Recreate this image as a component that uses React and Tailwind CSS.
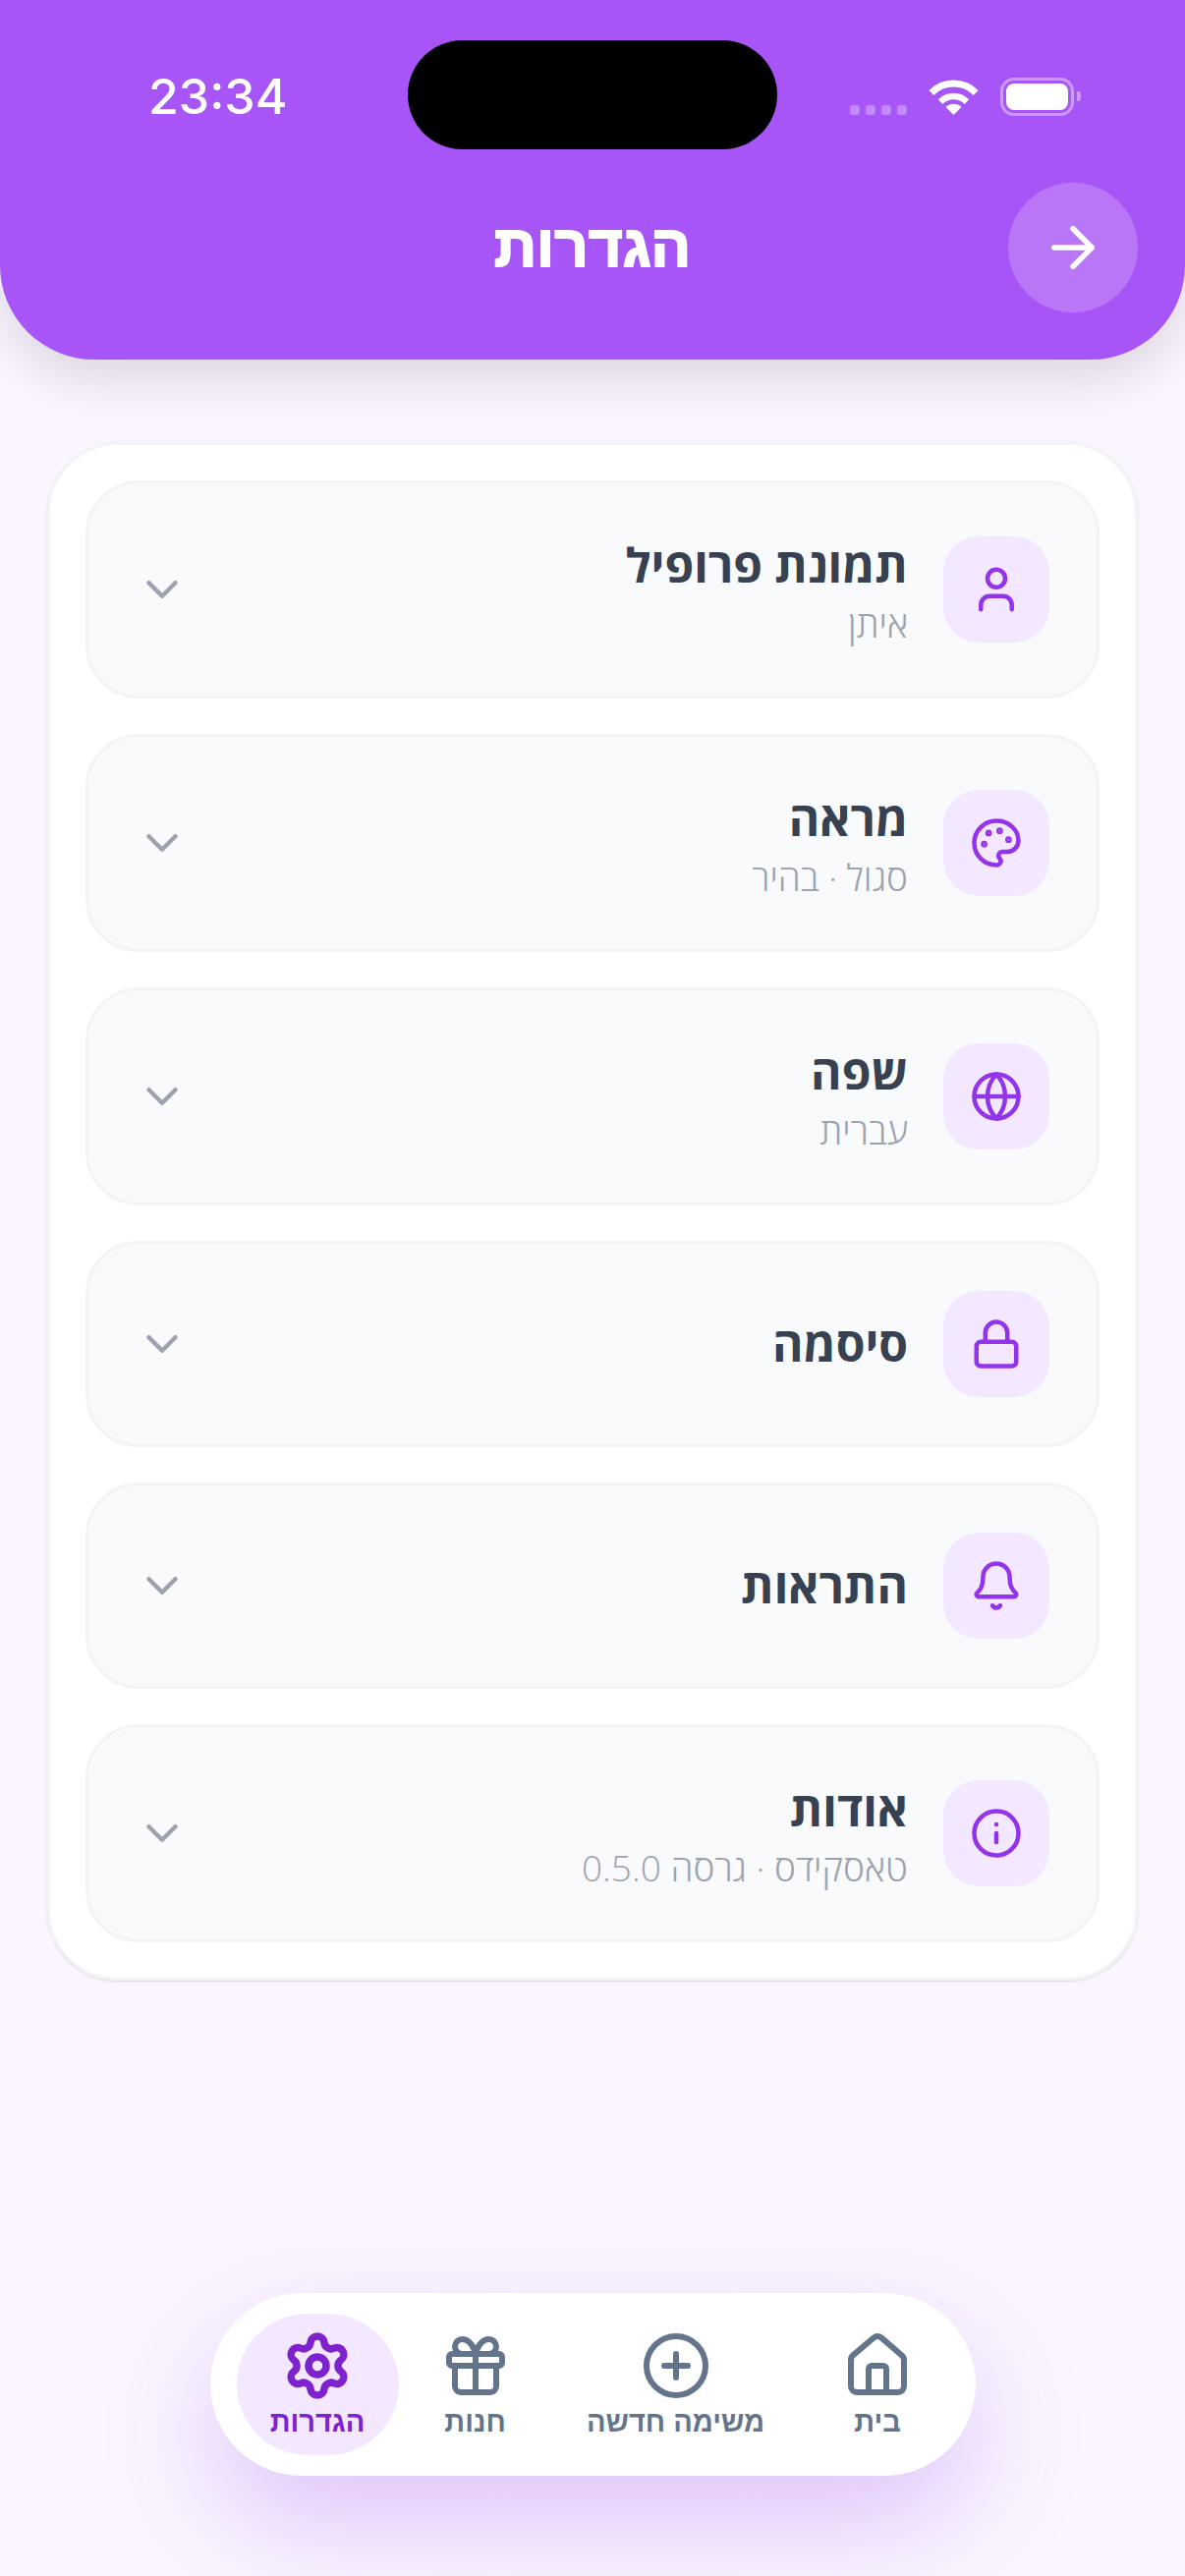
import React from 'react';
import { ArrowRight, ChevronDown, User, Palette, Globe, Lock, Bell, Info, House, CirclePlus, Gift, Settings } from 'lucide-react';

const rows = [
  { icon: User, title: 'תמונת פרופיל', sub: 'איתן' },
  { icon: Palette, title: 'מראה', sub: 'סגול · בהיר' },
  { icon: Globe, title: 'שפה', sub: 'עברית' },
  { icon: Lock, title: 'סיסמה' },
  { icon: Bell, title: 'התראות' },
  { icon: Info, title: 'אודות', sub: 'טאסקידס · גרסה 0.5.0' },
];

const tabs = [
  { icon: House, label: 'בית', width: 'w-[147px]' },
  { icon: CirclePlus, label: 'משימה חדשה', width: 'w-[252px]' },
  { icon: Gift, label: 'חנות', width: 'w-[144px]' },
  { icon: Settings, label: 'הגדרות', width: 'w-[165px]', active: true },
];

function StatusBar() {
  return (
    <div dir="ltr" className="relative flex items-center justify-between h-[78px] pt-[59px] box-content pl-[151px] pr-[106px]">
      <span className="text-[50px] leading-none font-medium text-white font-['Inter',sans-serif]">23:34</span>
      <div className="absolute left-[415px] top-[41px] w-[376px] h-[111px] rounded-[56px] bg-black" />
      <div className="flex items-center">
        <div className="flex gap-[6px] self-end mb-[1px] mr-[22px]">
          <div className="w-[10px] h-[10px] rounded-[3px] bg-white/30" />
          <div className="w-[10px] h-[10px] rounded-[3px] bg-white/30" />
          <div className="w-[10px] h-[10px] rounded-[3px] bg-white/30" />
          <div className="w-[10px] h-[10px] rounded-[3px] bg-white/30" />
        </div>
        <svg width="51" height="37" viewBox="0 0 51 37" className="mr-[22px]">
          <path d="M2.9 14.4A32 32 0 0 1 48.1 14.4" fill="none" stroke="white" strokeWidth="7" />
          <path d="M12.1 23.6A19 19 0 0 1 38.9 23.6" fill="none" stroke="white" strokeWidth="6.5" />
          <path d="M25.5 37L17.5 29A11.3 11.3 0 0 1 33.5 29Z" fill="white" />
        </svg>
        <div className="flex items-center gap-[3px]">
          <div className="w-[75px] h-[39px] rounded-[14px] border-[3px] border-white/40 p-[3px]">
            <div className="w-full h-full rounded-[8px] bg-white" />
          </div>
          <div className="w-[4px] h-[10px] rounded-r-[3px] bg-white/40" />
        </div>
      </div>
    </div>
  );
}

function Row({ icon: Icon, title, sub }) {
  return (
    <div className="flex items-center gap-[36px] rounded-[54px] border-[3px] border-[#f3f4f6] bg-[#f9fafb] p-[48px]">
      <div className="flex h-[108px] w-[108px] shrink-0 items-center justify-center rounded-[36px] bg-[#f3e8ff]">
        <Icon size={54} strokeWidth={2} className="text-[#9333ea]" />
      </div>
      <div className="flex-1 min-w-0 font-['Open_Sans',sans-serif]">
        <div className="text-[48px] leading-[70px] font-bold text-[#374151]">{title}</div>
        {sub && <div className="text-[37px] leading-[50px] font-light text-[#9ca3af]">{sub}</div>}
      </div>
      <ChevronDown size={54} strokeWidth={2} className="text-[#9ca3af] shrink-0" />
    </div>
  );
}

function Tab({ icon: Icon, label, active, width }) {
  return (
    <div className={`flex h-[144px] flex-col items-center justify-center rounded-[72px] ${width} ${active ? 'bg-[#f3e8ff] text-[#7e22ce]' : 'text-[#64748b]'}`}>
      <Icon size={72} strokeWidth={active ? 2.5 : 2} />
      <span className="text-[29px] leading-[36px] mt-[3px] font-bold whitespace-nowrap">{label}</span>
    </div>
  );
}

export default function App() {
  return (
    <div dir="rtl" className="flex h-[2622px] w-[1206px] flex-col bg-[#faf5ff] font-['Liberation_Sans',sans-serif]">
      <header className="h-[366px] rounded-b-[96px] bg-[#a855f7] shadow-[0_20px_50px_rgba(0,0,0,0.12)]">
        <StatusBar />
        <div className="mt-[49px] grid grid-cols-[132px_1fr_132px] items-center px-[48px]">
          <button className="flex h-[132px] w-[132px] items-center justify-center rounded-full bg-white/20 text-white">
            <ArrowRight size={66} strokeWidth={2} />
          </button>
          <h1 className="mb-[3px] text-center text-[60px] font-black text-white [-webkit-text-stroke:2px_white]">הגדרות</h1>
        </div>
      </header>

      <main className="mx-[48px] mt-[84px] flex flex-col gap-[36px] rounded-[72px] border-[3px] border-[#f3f4f6] bg-white p-[36px] shadow-sm">
        {rows.map(r => <Row key={r.title} {...r} />)}
      </main>

      <nav className="mt-auto mb-[102px] flex items-center gap-[6px] self-center rounded-[93px] bg-white pr-[26px] pl-[27px] py-[21px] shadow-[0_48px_120px_-8px_rgba(147,51,234,0.28)]">
        {tabs.map(t => <Tab key={t.label} {...t} />)}
      </nav>
    </div>
  );
}
